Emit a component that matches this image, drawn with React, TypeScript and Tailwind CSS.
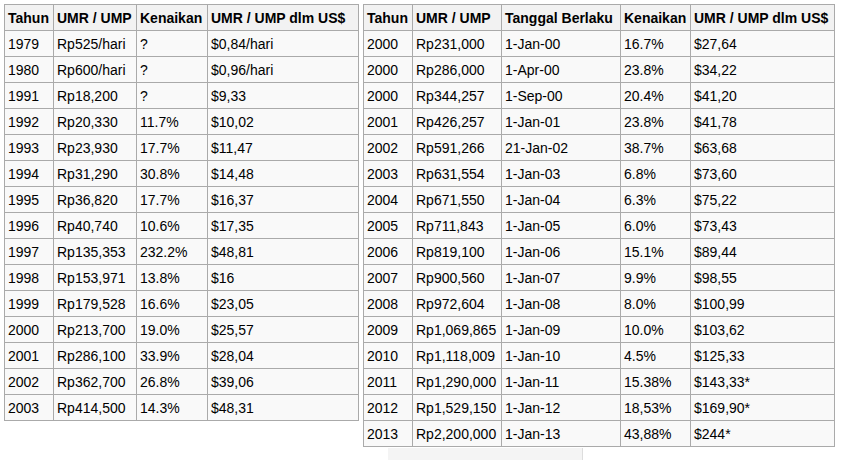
const leftRows: string[][] = [
  ['1979', 'Rp525/hari', '?', '$0,84/hari'],
  ['1980', 'Rp600/hari', '?', '$0,96/hari'],
  ['1991', 'Rp18,200', '?', '$9,33'],
  ['1992', 'Rp20,330', '11.7%', '$10,02'],
  ['1993', 'Rp23,930', '17.7%', '$11,47'],
  ['1994', 'Rp31,290', '30.8%', '$14,48'],
  ['1995', 'Rp36,820', '17.7%', '$16,37'],
  ['1996', 'Rp40,740', '10.6%', '$17,35'],
  ['1997', 'Rp135,353', '232.2%', '$48,81'],
  ['1998', 'Rp153,971', '13.8%', '$16'],
  ['1999', 'Rp179,528', '16.6%', '$23,05'],
  ['2000', 'Rp213,700', '19.0%', '$25,57'],
  ['2001', 'Rp286,100', '33.9%', '$28,04'],
  ['2002', 'Rp362,700', '26.8%', '$39,06'],
  ['2003', 'Rp414,500', '14.3%', '$48,31'],
];

const rightRows: string[][] = [
  ['2000', 'Rp231,000', '1-Jan-00', '16.7%', '$27,64'],
  ['2000', 'Rp286,000', '1-Apr-00', '23.8%', '$34,22'],
  ['2000', 'Rp344,257', '1-Sep-00', '20.4%', '$41,20'],
  ['2001', 'Rp426,257', '1-Jan-01', '23.8%', '$41,78'],
  ['2002', 'Rp591,266', '21-Jan-02', '38.7%', '$63,68'],
  ['2003', 'Rp631,554', '1-Jan-03', '6.8%', '$73,60'],
  ['2004', 'Rp671,550', '1-Jan-04', '6.3%', '$75,22'],
  ['2005', 'Rp711,843', '1-Jan-05', '6.0%', '$73,43'],
  ['2006', 'Rp819,100', '1-Jan-06', '15.1%', '$89,44'],
  ['2007', 'Rp900,560', '1-Jan-07', '9.9%', '$98,55'],
  ['2008', 'Rp972,604', '1-Jan-08', '8.0%', '$100,99'],
  ['2009', 'Rp1,069,865', '1-Jan-09', '10.0%', '$103,62'],
  ['2010', 'Rp1,118,009', '1-Jan-10', '4.5%', '$125,33'],
  ['2011', 'Rp1,290,000', '1-Jan-11', '15.38%', '$143,33*'],
  ['2012', 'Rp1,529,150', '1-Jan-12', '18,53%', '$169,90*'],
  ['2013', 'Rp2,200,000', '1-Jan-13', '43,88%', '$244*'],
];

function WageTable({
  headers,
  widths,
  rows,
  width,
}: {
  headers: string[];
  widths: number[];
  rows: string[][];
  width: string;
}) {
  return (
    <table className={`border-collapse table-fixed bg-[#f9f9f9] text-[14px] leading-none text-black ${width}`}>
      <colgroup>
        {widths.map((w, i) => (
          <col key={i} style={{ width: w }} />
        ))}
      </colgroup>
      <thead>
        <tr className="h-[26px] bg-[#f2f2f2]">
          {headers.map((h) => (
            <th key={h} className="border border-[#aaaaaa] px-[3px] text-left font-bold whitespace-nowrap">
              {h}
            </th>
          ))}
        </tr>
      </thead>
      <tbody>
        {rows.map((row, i) => (
          <tr key={i} className="h-[26px]">
            {row.map((cell, j) => (
              <td key={j} className="border border-[#aaaaaa] px-[3px] whitespace-nowrap">
                {cell}
              </td>
            ))}
          </tr>
        ))}
      </tbody>
    </table>
  );
}

export default function App() {
  return (
    <div className="w-[841px] h-[460px] overflow-hidden bg-white pl-[4px] pt-[4px] font-['Liberation_Sans',Arial,sans-serif]">
      <div className="flex items-start gap-[4px]">
        <WageTable
          headers={['Tahun', 'UMR / UMP', 'Kenaikan', 'UMR / UMP dlm US$']}
          widths={[49, 83, 71, 151]}
          rows={leftRows}
          width="w-[355px]"
        />
        <div className="flex flex-col">
          <WageTable
            headers={['Tahun', 'UMR / UMP', 'Tanggal Berlaku', 'Kenaikan', 'UMR / UMP dlm US$']}
            widths={[49, 89, 119, 70, 144]}
            rows={rightRows}
            width="w-[472px]"
          />
          <div className="mt-[1px] ml-[25px] h-[14px] w-[195px] bg-[#f4f4f4] border-r border-[#dddddd]" />
        </div>
      </div>
    </div>
  );
}
